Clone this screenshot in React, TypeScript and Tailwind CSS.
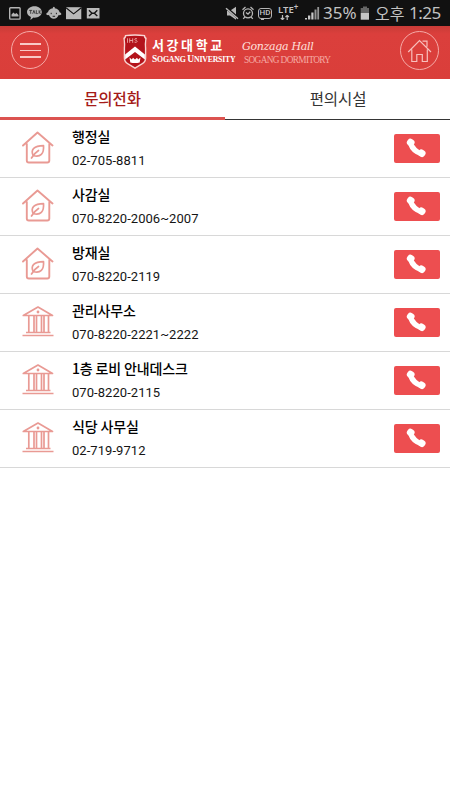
import React from 'react';

const KR = "font-['Noto_Sans_CJK_KR',sans-serif]";

const contacts = [
  { name: '행정실', phone: '02-705-8811', kind: 'house' },
  { name: '사감실', phone: '070-8220-2006~2007', kind: 'house' },
  { name: '방재실', phone: '070-8220-2119', kind: 'house' },
  { name: '관리사무소', phone: '070-8220-2221~2222', kind: 'hall' },
  { name: '1층 로비 안내데스크', phone: '070-8220-2115', kind: 'hall' },
  { name: '식당 사무실', phone: '02-719-9712', kind: 'hall' },
];

function NotificationIcons() {
  return (
    <svg className="h-[26px] w-[104px] shrink-0" viewBox="0 0 104 26" fill="none">
      <rect x="9.7" y="7.7" width="10.4" height="11.4" rx="0.8" stroke="#b5b5b5" strokeWidth="1.4" />
      <path d="M11.5 16.5v-2l2-2 1.5 1.5 1.5-1 2 2v1.5z" fill="#b5b5b5" />
      <path d="M34.5 6.3c4.2 0 7.3 2.5 7.3 5.7s-3.100 5.700-7.300 5.700l-1-.1-3.100 2.300.5-3C28.500 16 27 14.200 27 12c0-3.200 3.300-5.700 7.500-5.700z" fill="#b5b5b5" />
      <path d="M29.200 10.400h3M30.700 10.400v3.400M32.700 13.800l1.200-3.400 1.200 3.400M36.300 10.200v3.400h1.500M39.100 10.200v3.600M40.900 10.400l-1.500 1.600 1.500 1.800" stroke="#252525" strokeWidth="0.8" />
      <path d="M53.900 6.800c.9 0 1 .9.800 1.500 3 .4 4.500 2 4.900 4 .9.400 1.700 1 1.800 2-.8.900-1.900 1-2.700.8-1 2.300-2.500 3.700-4.900 3.700s-3.900-1.400-4.900-3.700c-.8.200-1.900.1-2.700-.8.100-1 .9-1.600 1.800-2 .4-2 1.900-3.600 4.900-4-.1-.6.100-1.500 1-1.500z" fill="#b5b5b5" />
      <path d="M51.200 12.800v1.400M56.400 12.800v1.400M52.600 16.300h2.500" stroke="#222" strokeWidth="1" />
      <rect x="66" y="7.200" width="15.300" height="12" fill="#bababa" />
      <path d="M66 7.700l7.600 6.200 7.700-6.200" stroke="#111" strokeWidth="1.100" />
      <rect x="86.800" y="8" width="12.700" height="10.500" fill="#bababa" />
      <path d="M89 10.300l3 2.900-3 2.900M97.300 10.300l-3 2.900 3 2.900M92 13.200h2.300" stroke="#151515" strokeWidth="1.400" />
    </svg>
  );
}

function SoundIcons() {
  return (
    <svg className="h-[26px] w-[30px] shrink-0" viewBox="0 0 30 26" fill="none">
      <path d="M2 10.700h3l6-4v13l-6-4.300H2z" fill="#b8b8b8" />
      <path d="M1 7.500l12 10.500" stroke="#111" strokeWidth="2.600" />
      <path d="M1 8.200l12 10.500" stroke="#b8b8b8" strokeWidth="1.400" />
      <circle cx="23" cy="13.300" r="4.500" stroke="#b8b8b8" strokeWidth="1.300" />
      <path d="M17.500 9.700l3-2.600M28.500 9.700l-3-2.600M19.900 17.100l-1.700 1.700M26.100 17.100l1.700 1.700M21 12.400l2 1.800 2.200-2.500" stroke="#b8b8b8" strokeWidth="1.300" />
    </svg>
  );
}

function StatusBar() {
  return (
    <div className="flex h-[26px] items-center bg-[#111111] text-[#c2c2c2]">
      <NotificationIcons />
      <div className="ml-auto flex h-[26px] items-center pr-[9px]">
        <SoundIcons />
        <div className="relative ml-[3px] flex h-[11px] w-[14px] items-center justify-center rounded-[3px] border border-[#b5b5b5] font-['Roboto',sans-serif] text-[8px] font-medium leading-none">
          HD
          <span className="absolute -bottom-[2px] left-[2px] h-[2px] w-[3px] bg-[#b5b5b5]" />
        </div>
        <div className="ml-[6px] flex h-[26px] w-[22px] flex-col pt-[5px] font-['Noto_Sans',sans-serif]">
          <span className="flex text-[9.5px] font-semibold leading-[10px]">LTE<sup className="top-[-1px] text-[8px] leading-[6px]">+</sup></span>
          <svg className="ml-[2px] h-[5px] w-[10px]" viewBox="0 0 10 5" fill="none" stroke="#bdbdbd" strokeWidth="1.200">
            <path d="M2.500 0v4.500M.8 3l1.700 1.600L4.200 3M7.200 5V.4M5.500 2L7.200.4 8.900 2" />
          </svg>
        </div>
        <svg className="ml-[5px] h-[26px] w-[15px]" viewBox="0 0 15 26">
          <path d="M0 19.500v-1.500h2v1.500zM3 19.500v-4h2.300v4zM6.300 19.500v-7h2.200v7z" fill="#c7c7c7" />
          <path d="M9.500 19.500V9.400h2v10.100zM12.300 19.500V7h1.800v12.500z" fill="#949494" />
        </svg>
        <span className="ml-[3px] w-[37px] whitespace-nowrap font-['Noto_Sans',sans-serif] text-[17px] leading-[30px]">35%</span>
        <svg className="h-[26px] w-[10px]" viewBox="0 0 10 26">
          <path d="M3 6.500h4v1.500h2V13H.700V8H3z" fill="#656565" />
          <path d="M.700 13H9v6.700H.700z" fill="#c6c6c6" />
        </svg>
        <span className={`ml-[5px] w-[34px] whitespace-nowrap text-[16px] leading-[26px] ${KR}`}>오후</span>
        <span className="w-[32px] whitespace-nowrap font-['Noto_Sans',sans-serif] text-[17px] leading-[30px] tracking-[-0.500px]">1:25</span>
      </div>
    </div>
  );
}

function Shield() {
  return (
    <svg className="h-[36px] w-[26px] shrink-0" viewBox="0 0 26 36">
      <path d="M3 1q10-1.500 20 0 .2 2 1.700 3-.9 5-.4 10V24c0 3-1.200 5-4 6.500L13 35l-7.300-4.500C3 29 1.700 27 1.700 24V14q.5-5-.4-10Q2.800 3 3 1z" fill="#f8d5d2" />
      <path d="M4.200 2.300q8.800-1.200 17.600 0 .2 1.700 1.400 2.700-.7 4.500-.3 9V24c0 2.400-1 4-3.200 5.200L13 33.300l-6.700-4.100C4.200 28 3.100 26.400 3.100 24V14q.4-4.500-.3-9 1.200-1 1.400-2.700z" fill="#b3131b" />
      <path d="M3.100 20.500L13 12.500l9.900 8v5L13 18l-9.900 7.500z" fill="#fff" />
      <path d="M7.500 23.500l2.300 2L11 23.800l2 1.700 2-1.700 1.200 1.700 2.300-2-.8 5q-4.700 1.200-9.400 0z" fill="#fff" />
      <path d="M5.500 4.300v4.500M7.700 4.300v4.500M10.700 4.300v4.500M7.700 6.500h3M15 4.800q-2.300-.9-2.300.5c0 1.200 2.400.8 2.400 2.200q-.3 1.500-2.600.6" fill="none" stroke="#f1b7b2" strokeWidth="0.800" />
    </svg>
  );
}

function Header() {
  return (
    <header className="flex h-[53px] items-start bg-gradient-to-b from-[#c83b37] via-[#db3f3c] via-15% to-[#da3e3a] px-[11px] pt-[5px]">
      <button aria-label="메뉴" className="flex size-[38px] shrink-0 flex-col items-center justify-center gap-[5px] rounded-full border border-[#f5aaa7] pt-px">
        <span className="h-[1.500px] w-[21px] bg-[#f8c9c6]" />
        <span className="h-[1.500px] w-[21px] bg-[#f8c9c6]" />
        <span className="h-[1.500px] w-[21px] bg-[#f8c9c6]" />
      </button>
      <div className="ml-[73px] mt-[3px] flex">
        <Shield />
        <div className="ml-[4px] w-[90px] pt-[4px] text-white">
          <div className={`whitespace-nowrap text-[13px] font-bold leading-[14px] tracking-[2.600px] ${KR}`}>서강대학교</div>
          <div className="mt-px whitespace-nowrap font-['Liberation_Serif',serif] text-[9.500px] font-bold leading-[12px] tracking-[-0.200px]">S<span className="text-[7.800px]">OGANG </span>U<span className="text-[7.800px]">NIVERSITY</span></div>
        </div>
        <div className="pt-[5px]">
          <div className="whitespace-nowrap font-['DejaVu_Serif',serif] text-[11px] italic leading-[16px] tracking-[-0.300px] text-[#ffe0dc]">Gonzaga Hall</div>
          <div className="ml-[2px] whitespace-nowrap font-['Liberation_Serif',serif] text-[9.300px] leading-[10px] tracking-[-0.640px] text-[#f5aaa3]">SOGANG DORMITORY</div>
        </div>
      </div>
      <button aria-label="홈" className="ml-auto flex size-[39px] shrink-0 items-center justify-center rounded-full border border-[#f5aaa7]">
        <svg className="size-[25px]" viewBox="0 0 25 25" fill="none" stroke="#f8bfbc" strokeWidth="1.200">
          <path d="M1.200 14L12.500 2.500 24 14M4.800 11.500V23.500h5v-7h5.500v7h5v-12M15.500 3.200h4.500v5.500" />
        </svg>
      </button>
    </header>
  );
}

function HouseIcon() {
  return (
    <svg className="mb-[2px] h-[34px] w-[32px]" viewBox="0 0 32 34" fill="none" stroke="#e99a94" strokeWidth="1.900" strokeLinecap="round" strokeLinejoin="round">
      <path d="M1 14.500L15.500 1.500 30.500 14.500M4.800 13v16.500q0 2 2 2h18.500q2 0 2-2V13" />
      <path d="M9.500 27q2.500-4.500 7-7.500M11 24.500C8.500 18.500 12 15 21.500 14.700 22.200 22.500 18.500 27 11 24.500" strokeWidth="1.700" />
    </svg>
  );
}

function HallIcon() {
  return (
    <svg className="mb-[3px] h-[32px] w-[32px]" viewBox="0 0 32 32" fill="none" stroke="#e99a94" strokeWidth="1.700" strokeLinejoin="round">
      <path d="M1.300 10.500L16 2l14.500 8.500zM4 27.500h24.500M.500 30.500h31M6.800 10.500v17M12 10.500v17M14.500 10.500v17M19.500 10.500v17M22 10.500v17M26.500 10.500v17" />
      <circle cx="16" cy="7" r="1.400" fill="#e99a94" stroke="none" />
    </svg>
  );
}

function CallButton() {
  return (
    <button aria-label="전화" className="flex h-[29px] w-[46px] items-center justify-center rounded-[2px] bg-[#ed4e50]">
      <svg className="mr-[2px] mt-[-1px] size-[20px]" viewBox="0 0 20 20">
        <path d="M3.500 6.500C5 11 9.500 15 14.500 16.800L14.500 14.500Q8.500 10.500 6 6z" fill="#fff" stroke="#fff" strokeWidth="2.500" />
        <rect x="1" y="1" width="7.400" height="7" rx="3" transform="rotate(35 4.700 4.500)" fill="#fff" />
        <rect x="12" y="11.700" width="7.400" height="7" rx="3" transform="rotate(35 15.700 15.200)" fill="#fff" />
      </svg>
    </button>
  );
}

export default function App() {
  return (
    <div className="min-h-[800px] w-[450px] bg-white">
      <StatusBar />
      <Header />
      <nav className={`grid h-[41px] grid-cols-2 text-center text-[15.500px] leading-[38px] tracking-[-0.100px] ${KR}`}>
        <div className="h-[41px] border-b-[3px] border-[#dc5350] font-medium text-[#a51b18]">문의전화</div>
        <div className="h-[41px] border-b border-[#353535] pl-px text-[#333333]">편의시설</div>
      </nav>
      <ul>
        {contacts.map((contact) => (
          <li key={contact.name} className="flex h-[58px] items-center border-b border-[#d8d8d8] pl-[22px] pr-[10px]">
            <div className="flex w-[50px]">{contact.kind === 'house' ? <HouseIcon /> : <HallIcon />}</div>
            <div className="flex-1 text-black">
              <div className={`whitespace-nowrap text-[14px] font-medium leading-[22px] tracking-[-0.140px] ${KR}`}>{contact.name}</div>
              <div className="mt-px font-['Roboto',sans-serif] text-[13px] leading-[25px] tracking-[0.050px] text-[#151515]">{contact.phone}</div>
            </div>
            <CallButton />
          </li>
        ))}
      </ul>
    </div>
  );
}
